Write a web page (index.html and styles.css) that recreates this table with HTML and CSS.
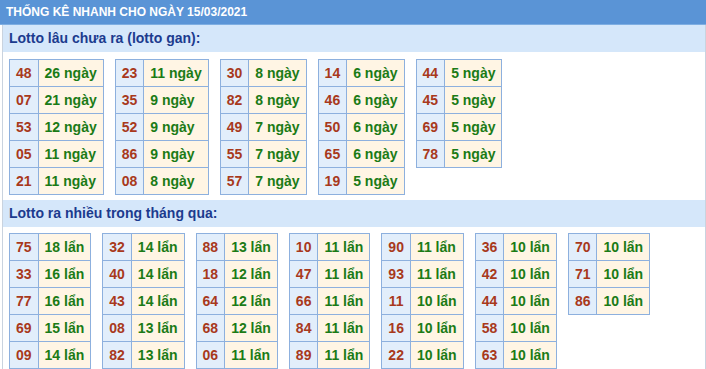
FILE: index.html
```html
<!DOCTYPE html>
<html>
<head>
<meta charset="utf-8">
<link rel="stylesheet" href="styles.css">
</head>
<body>
<div class="title">THỐNG KÊ NHANH CHO NGÀY 15/03/2021</div>
<div class="box">
  <div class="band">Lotto lâu chưa ra (lotto gan):</div>
  <div class="wrap first">
    <table class="t"><tr><td class="n">48</td><td class="v">26 ngày</td></tr><tr><td class="n">07</td><td class="v">21 ngày</td></tr><tr><td class="n">53</td><td class="v">12 ngày</td></tr><tr><td class="n">05</td><td class="v">11 ngày</td></tr><tr><td class="n">21</td><td class="v">11 ngày</td></tr></table>
    <table class="t"><tr><td class="n">23</td><td class="v">11 ngày</td></tr><tr><td class="n">35</td><td class="v">9 ngày</td></tr><tr><td class="n">52</td><td class="v">9 ngày</td></tr><tr><td class="n">86</td><td class="v">9 ngày</td></tr><tr><td class="n">08</td><td class="v">8 ngày</td></tr></table>
    <table class="t"><tr><td class="n">30</td><td class="v">8 ngày</td></tr><tr><td class="n">82</td><td class="v">8 ngày</td></tr><tr><td class="n">49</td><td class="v">7 ngày</td></tr><tr><td class="n">55</td><td class="v">7 ngày</td></tr><tr><td class="n">57</td><td class="v">7 ngày</td></tr></table>
    <table class="t"><tr><td class="n">14</td><td class="v">6 ngày</td></tr><tr><td class="n">46</td><td class="v">6 ngày</td></tr><tr><td class="n">50</td><td class="v">6 ngày</td></tr><tr><td class="n">65</td><td class="v">6 ngày</td></tr><tr><td class="n">19</td><td class="v">5 ngày</td></tr></table>
    <table class="t"><tr><td class="n">44</td><td class="v">5 ngày</td></tr><tr><td class="n">45</td><td class="v">5 ngày</td></tr><tr><td class="n">69</td><td class="v">5 ngày</td></tr><tr><td class="n">78</td><td class="v">5 ngày</td></tr></table>
  </div>
  <div class="band">Lotto ra nhiều trong tháng qua:</div>
  <div class="wrap">
    <table class="t"><tr><td class="n">75</td><td class="v">18 lẩn</td></tr><tr><td class="n">33</td><td class="v">16 lẩn</td></tr><tr><td class="n">77</td><td class="v">16 lẩn</td></tr><tr><td class="n">69</td><td class="v">15 lẩn</td></tr><tr><td class="n">09</td><td class="v">14 lẩn</td></tr></table>
    <table class="t"><tr><td class="n">32</td><td class="v">14 lẩn</td></tr><tr><td class="n">40</td><td class="v">14 lẩn</td></tr><tr><td class="n">43</td><td class="v">14 lẩn</td></tr><tr><td class="n">08</td><td class="v">13 lẩn</td></tr><tr><td class="n">82</td><td class="v">13 lẩn</td></tr></table>
    <table class="t"><tr><td class="n">88</td><td class="v">13 lẩn</td></tr><tr><td class="n">18</td><td class="v">12 lẩn</td></tr><tr><td class="n">64</td><td class="v">12 lẩn</td></tr><tr><td class="n">68</td><td class="v">12 lẩn</td></tr><tr><td class="n">06</td><td class="v">11 lẩn</td></tr></table>
    <table class="t"><tr><td class="n">10</td><td class="v">11 lẩn</td></tr><tr><td class="n">47</td><td class="v">11 lẩn</td></tr><tr><td class="n">66</td><td class="v">11 lẩn</td></tr><tr><td class="n">84</td><td class="v">11 lẩn</td></tr><tr><td class="n">89</td><td class="v">11 lẩn</td></tr></table>
    <table class="t"><tr><td class="n">90</td><td class="v">11 lẩn</td></tr><tr><td class="n">93</td><td class="v">11 lẩn</td></tr><tr><td class="n">11</td><td class="v">10 lẩn</td></tr><tr><td class="n">16</td><td class="v">10 lẩn</td></tr><tr><td class="n">22</td><td class="v">10 lẩn</td></tr></table>
    <table class="t"><tr><td class="n">36</td><td class="v">10 lẩn</td></tr><tr><td class="n">42</td><td class="v">10 lẩn</td></tr><tr><td class="n">44</td><td class="v">10 lẩn</td></tr><tr><td class="n">58</td><td class="v">10 lẩn</td></tr><tr><td class="n">63</td><td class="v">10 lẩn</td></tr></table>
    <table class="t"><tr><td class="n">70</td><td class="v">10 lẩn</td></tr><tr><td class="n">71</td><td class="v">10 lẩn</td></tr><tr><td class="n">86</td><td class="v">10 lẩn</td></tr></table>
  </div>
</div>
</body>
</html>
```
FILE: styles.css
```css
html, body {
  margin: 0;
  padding: 0;
  background: #ffffff;
  font-family: "Liberation Sans", Arial, sans-serif;
}
.title {
  height: 24px;
  line-height: 24px;
  background: #5a94d6;
  border-bottom: 1px solid #7eaee2;
  color: #ffffff;
  font-size: 12px;
  font-weight: bold;
  padding-left: 6px;
}
.box {
  margin-left: 2px;
  width: 702px;
  border-left: 1px solid #c9d3df;
  border-right: 1px solid #c9d3df;
}
.band {
  height: 27px;
  line-height: 27px;
  background: #d5e7fa;
  color: #1c3b8e;
  font-size: 14px;
  font-weight: bold;
  padding-left: 6px;
}
.wrap {
  display: flex;
  align-items: flex-start;
  gap: 11px;
  padding: 6px;
}
.wrap.first {
  padding: 7px 6px 5px;
}
.t {
  border-collapse: collapse;
  border: 1px solid #8db0de;
}
.t td {
  border: 1px solid #8db0de;
  padding: 5px 6px;
  line-height: 16px;
  font-size: 14px;
  font-weight: bold;
  white-space: nowrap;
}
.n {
  background: #e2eefb;
  color: #a8391c;
  text-align: center;
}
.v {
  background: #fff5e4;
  color: #1b7b16;
}
```
